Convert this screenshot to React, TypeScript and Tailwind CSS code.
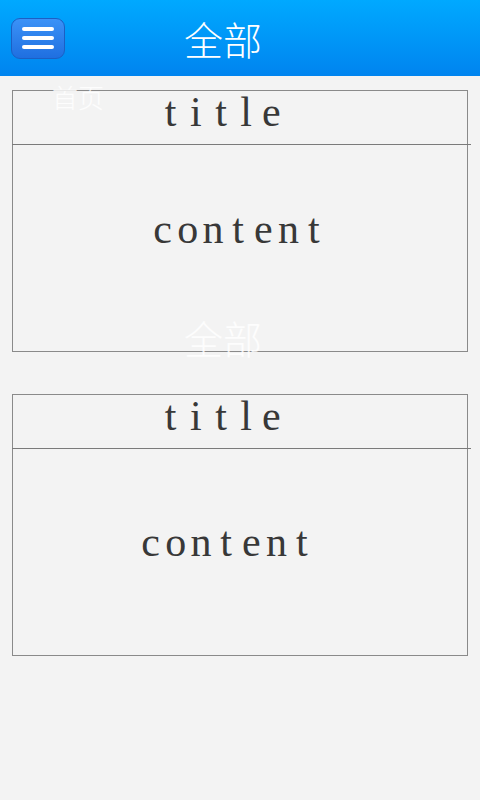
const cards = [
  { id: 1, title: "title", content: "content", contentPad: "pl-[137px]", contentOffset: "pb-[38px]" },
  { id: 2, title: "title", content: "content", contentPad: "pl-[125px]", contentOffset: "pb-[20px]" },
];

// the reference text is a fixed-width serif, so each letter sits in its own cell
const MonoText = ({ text }: { text: string }) => (
  <span className="flex font-['Liberation_Serif',serif] text-[42px] leading-none text-[#383838]">
    {text.split("").map((ch, i) => (
      <span key={i} className="inline-block w-[25.2px] text-center">
        {ch}
      </span>
    ))}
  </span>
);

const MenuButton = () => (
  <button
    className="flex h-[41px] w-[54px] flex-col items-center justify-center gap-[5px] rounded-[9px] border border-[#1c5fc4] bg-gradient-to-b from-[#3b92f7] to-[#1f6fe0]"
    aria-label="Menu"
  >
    <span className="block h-[4px] w-[32px] rounded-full bg-white" />
    <span className="block h-[4px] w-[32px] rounded-full bg-white" />
    <span className="block h-[4px] w-[32px] rounded-full bg-white" />
  </button>
);

export default function App() {
  return (
    <div className="relative min-h-[800px] w-[480px] bg-[#f3f3f3] font-['Noto_Sans_CJK_SC',sans-serif]">
      <header className="flex h-[76px] items-center bg-gradient-to-b from-[#00a9ff] to-[#0084ef] pl-[11px]">
        <MenuButton />
        <h1 className="ml-[119px] text-[39px] font-light leading-none text-white">全部</h1>
      </header>

      <main className="flex flex-col gap-[42px] pl-[12px] pt-[14px]">
        {cards.map((card) => (
          <div key={card.id} className="flex flex-col">
            <div className="flex h-[54px] w-[456px] items-center border-x border-t border-[#8a8a8a] pl-[145px] pb-[12px]">
              <MonoText text={card.title} />
            </div>
            <div className="h-px w-[459px] bg-[#7a7a7a]" />
            <div
              className={`flex h-[207px] w-[456px] items-center border-x border-b border-[#8a8a8a] ${card.contentPad} ${card.contentOffset}`}
            >
              <MonoText text={card.content} />
            </div>
          </div>
        ))}
      </main>

      {/* ghost labels left over from the slide menu */}
      <span className="absolute left-[52px] top-[84px] text-[26px] font-light leading-none text-white/80">首页</span>
      <span className="absolute left-[184px] top-[318px] text-[39px] font-light leading-none text-white/80">全部</span>
    </div>
  );
}
